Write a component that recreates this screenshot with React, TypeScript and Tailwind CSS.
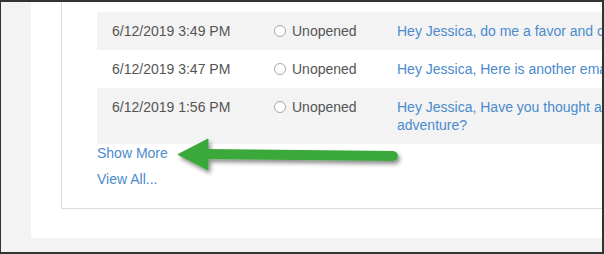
import React from 'react';

type Email = { sent: string; status: string; subject: React.ReactNode };

const EMAILS: Email[] = [
    { sent: '6/12/2019 3:49 PM', status: 'Unopened', subject: 'Hey Jessica, do me a favor and click on this link' },
    { sent: '6/12/2019 3:47 PM', status: 'Unopened', subject: 'Hey Jessica, Here is another email for you' },
    {
        sent: '6/12/2019 1:56 PM',
        status: 'Unopened',
        subject: (
            <>
                Hey Jessica, Have you thought about your next
                <br />
                adventure?
            </>
        ),
    },
];

const Arrow: React.FC = () => (
    <svg
        className="absolute left-[160px] top-[125px] pointer-events-none"
        width="260"
        height="60"
        viewBox="160 125 260 60"
    >
        <defs>
            <filter id="arrowShadow" x="-10%" y="-40%" width="130%" height="200%">
                <feDropShadow dx="2" dy="3" stdDeviation="2" floodColor="#000" floodOpacity="0.45" />
            </filter>
        </defs>
        <g filter="url(#arrowShadow)" fill="#3aa83a" stroke="#3aa83a">
            <line x1="204" y1="152" x2="392" y2="154" strokeWidth="10" strokeLinecap="round" />
            <polygon points="177,152.5 207,137 207,168" strokeWidth="1" strokeLinejoin="round" />
        </g>
    </svg>
);

export default function App() {
    return (
        <div
            className="relative w-[604px] h-[254px] overflow-hidden bg-[#f3f3f3] border-t-2 border-r-2 border-b-2 border-l border-[#333333]"
            style={{ fontFamily: '"Liberation Sans", Arial, sans-serif' }}
        >
            <div className="w-[900px] pl-[30px]">
                {/* White panel */}
                <div className="bg-white pl-[30px] pb-[29px]">
                    {/* Card */}
                    <div className="border-l border-b border-[#dcdcdc] pl-[35px] pt-[10px] pb-[20px] text-[14px] leading-[18px]">
                        <div>
                            {EMAILS.map((email, i) => (
                                <div
                                    key={email.sent}
                                    className={`flex py-[10px] pl-[15px] ${i % 2 === 0 ? 'bg-[#f3f3f3]' : 'bg-white'}`}
                                >
                                    <div className="w-[162px] shrink-0 text-[#555555]">{email.sent}</div>
                                    <div className="w-[123px] shrink-0 flex items-start gap-[6px] text-[#555555]">
                                        <span className="mt-[3px] w-[12px] h-[12px] rounded-full border border-[#a8a8a8] bg-white shrink-0" />
                                        <span>{email.status}</span>
                                    </div>
                                    <div className="whitespace-nowrap text-[#4a8bcd]">{email.subject}</div>
                                </div>
                            ))}
                        </div>
                        <div className="text-[#4a8bcd]">Show More</div>
                        <div className="mt-[8px] text-[#4a8bcd]">View All...</div>
                    </div>
                </div>
            </div>
            <Arrow />
        </div>
    );
}
